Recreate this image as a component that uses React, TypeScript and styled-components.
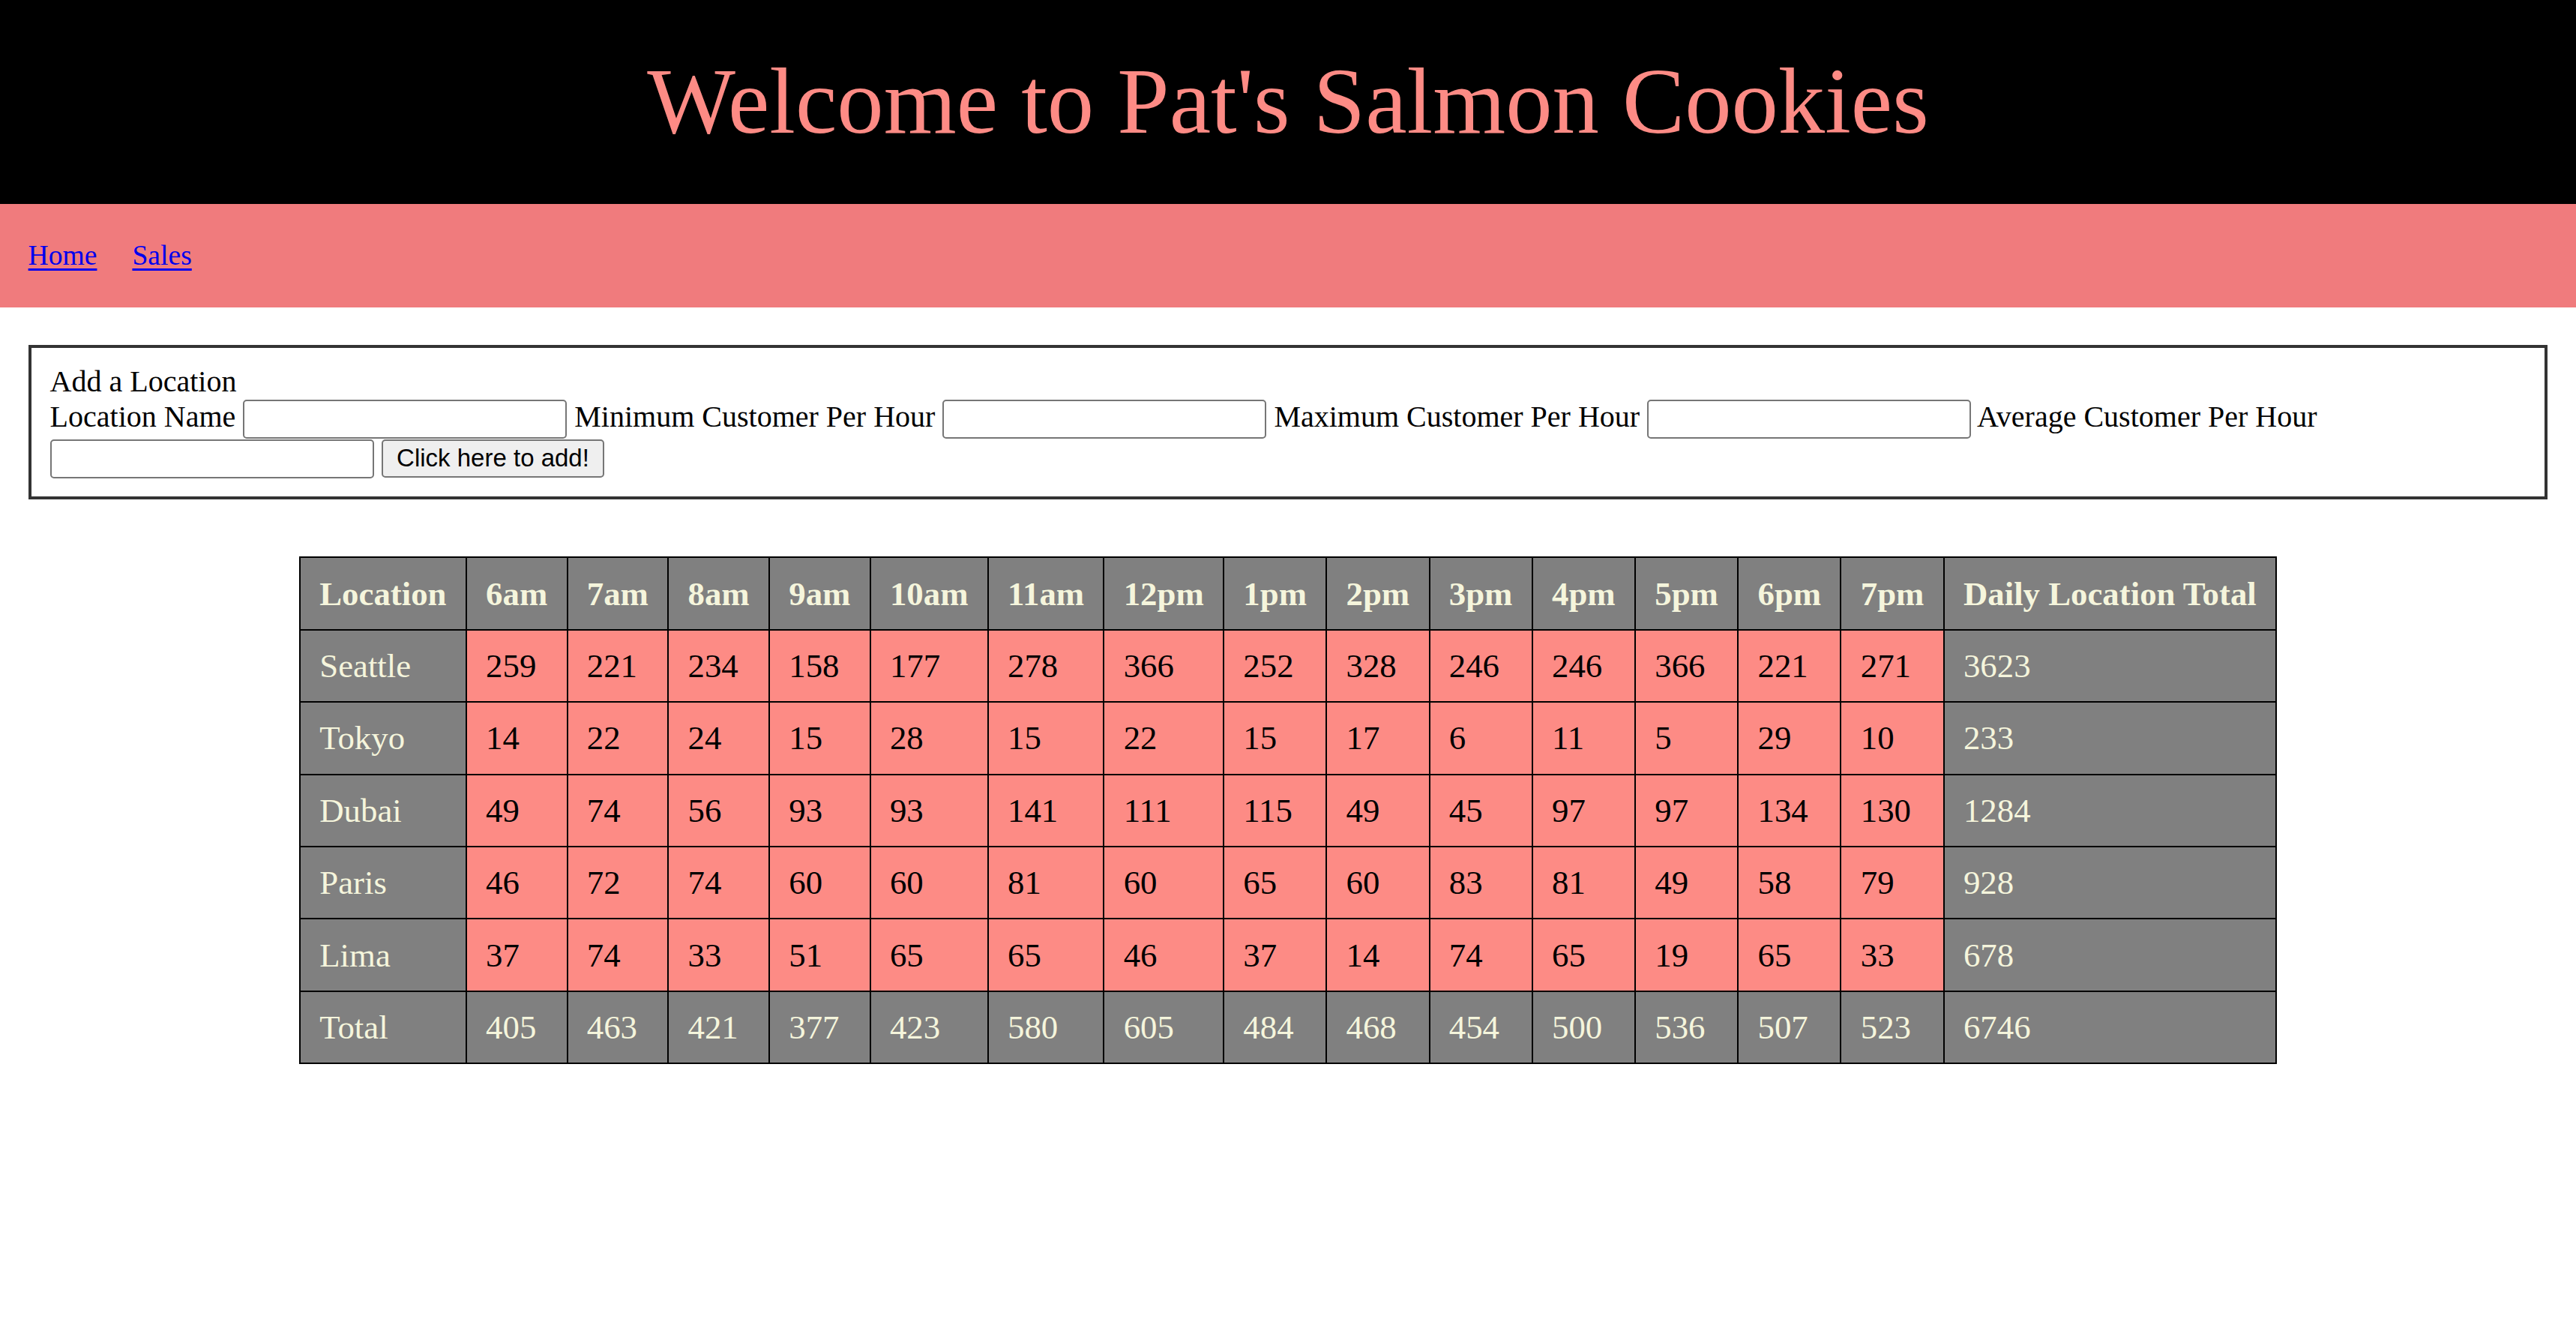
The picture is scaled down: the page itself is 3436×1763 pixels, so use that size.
import React from "react";
import styled, { createGlobalStyle } from "styled-components";

const GlobalStyle = createGlobalStyle`
  html, body {
    margin: 0;
    padding: 0;
    background: #ffffff;
  }
  body {
    font-family: "Liberation Serif", "Times New Roman", serif;
    font-size: 37.6px;
    color: #000;
  }
`;

const Header = styled.header`
  background: #000000;
  padding: 64.4px 0;
`;

const Title = styled.h1`
  margin: 0;
  text-align: center;
  font-family: "Liberation Serif", "Times New Roman", serif;
  font-weight: normal;
  font-size: 124.7px;
  line-height: normal;
  color: #fd8b85;
`;

const Nav = styled.nav`
  background: #f07b7d;
  display: flex;
  gap: 47px;
  padding: 47.4px 37.6px;
`;

const NavLink = styled.a`
  font-size: 37.6px;
  line-height: normal;
  color: #0000ee;
  text-decoration: underline;
  text-decoration-thickness: 3px;
  text-underline-offset: 5px;
`;

const Main = styled.main`
  padding: 50.7px 37.6px 0;
`;

const FormBox = styled.form`
  border: 4.7px solid #333333;
  padding: 21px 25px 24.5px;
  font-size: 40px;
  line-height: normal;
`;

const FormTitle = styled.div``;

const FieldLine = styled.div``;

const Input = styled.input`
  box-sizing: border-box;
  width: 432px;
  height: 51.7px;
  border: 2.35px solid #767676;
  border-radius: 5px;
  padding: 2px 5px;
  font-family: "Liberation Sans", Arial, sans-serif;
  font-size: 31.3px;
  background: #ffffff;
  margin: 0;
`;

const Button = styled.button`
  box-sizing: border-box;
  height: 51px;
  padding: 0 18.5px;
  border: 2.35px solid #767676;
  border-radius: 5px;
  background: #efefef;
  font-family: "Liberation Sans", Arial, sans-serif;
  font-size: 33px;
  color: #000;
  margin: 0;
`;

const Table = styled.table`
  margin: 76px auto 0;
  border-collapse: collapse;
  border: 2px solid #000;
  font-family: "Liberation Serif", "Times New Roman", serif;
  font-size: 44.8px;
  line-height: normal;
`;

type Tone = "gray" | "salmon";

const HeadCell = styled.th`
  background: #808080;
  color: #f5f5dc;
  font-weight: bold;
  text-align: left;
  padding: 21.2px 25.3px;
  border: 2px solid #000;
  white-space: nowrap;
`;

const Cell = styled.td<{ $tone: Tone }>`
  background: ${(p) => (p.$tone === "gray" ? "#808080" : "#fd8b85")};
  color: ${(p) => (p.$tone === "gray" ? "#f5f5dc" : "#000000")};
  text-align: left;
  padding: 21.2px 25.3px;
  border: 2px solid #000;
  white-space: nowrap;
`;

const hours = [
  "6am", "7am", "8am", "9am", "10am", "11am", "12pm",
  "1pm", "2pm", "3pm", "4pm", "5pm", "6pm", "7pm",
];

const stores: { name: string; sales: number[]; total: number }[] = [
  { name: "Seattle", sales: [259, 221, 234, 158, 177, 278, 366, 252, 328, 246, 246, 366, 221, 271], total: 3623 },
  { name: "Tokyo", sales: [14, 22, 24, 15, 28, 15, 22, 15, 17, 6, 11, 5, 29, 10], total: 233 },
  { name: "Dubai", sales: [49, 74, 56, 93, 93, 141, 111, 115, 49, 45, 97, 97, 134, 130], total: 1284 },
  { name: "Paris", sales: [46, 72, 74, 60, 60, 81, 60, 65, 60, 83, 81, 49, 58, 79], total: 928 },
  { name: "Lima", sales: [37, 74, 33, 51, 65, 65, 46, 37, 14, 74, 65, 19, 65, 33], total: 678 },
];

const totals = [405, 463, 421, 377, 423, 580, 605, 484, 468, 454, 500, 536, 507, 523];
const grandTotal = 6746;

export default function App() {
  return (
    <>
      <GlobalStyle />
      <Header>
        <Title>Welcome to Pat's Salmon Cookies</Title>
      </Header>
      <Nav>
        <NavLink href="#">Home</NavLink>
        <NavLink href="#">Sales</NavLink>
      </Nav>
      <Main>
        <FormBox onSubmit={(e) => e.preventDefault()}>
          <FormTitle>Add a Location</FormTitle>
          <FieldLine>
            Location Name <Input type="text" /> Minimum Customer Per Hour{" "}
            <Input type="text" /> Maximum Customer Per Hour <Input type="text" />{" "}
            Average Customer Per Hour <Input type="text" />{" "}
            <Button type="submit">Click here to add!</Button>
          </FieldLine>
        </FormBox>
        <Table>
          <thead>
            <tr>
              <HeadCell>Location</HeadCell>
              {hours.map((h) => (
                <HeadCell key={h}>{h}</HeadCell>
              ))}
              <HeadCell>Daily Location Total</HeadCell>
            </tr>
          </thead>
          <tbody>
            {stores.map((s) => (
              <tr key={s.name}>
                <Cell $tone="gray">{s.name}</Cell>
                {s.sales.map((v, i) => (
                  <Cell $tone="salmon" key={i}>
                    {v}
                  </Cell>
                ))}
                <Cell $tone="gray">{s.total}</Cell>
              </tr>
            ))}
            <tr>
              <Cell $tone="gray">Total</Cell>
              {totals.map((v, i) => (
                <Cell $tone="gray" key={i}>
                  {v}
                </Cell>
              ))}
              <Cell $tone="gray">{grandTotal}</Cell>
            </tr>
          </tbody>
        </Table>
      </Main>
    </>
  );
}
